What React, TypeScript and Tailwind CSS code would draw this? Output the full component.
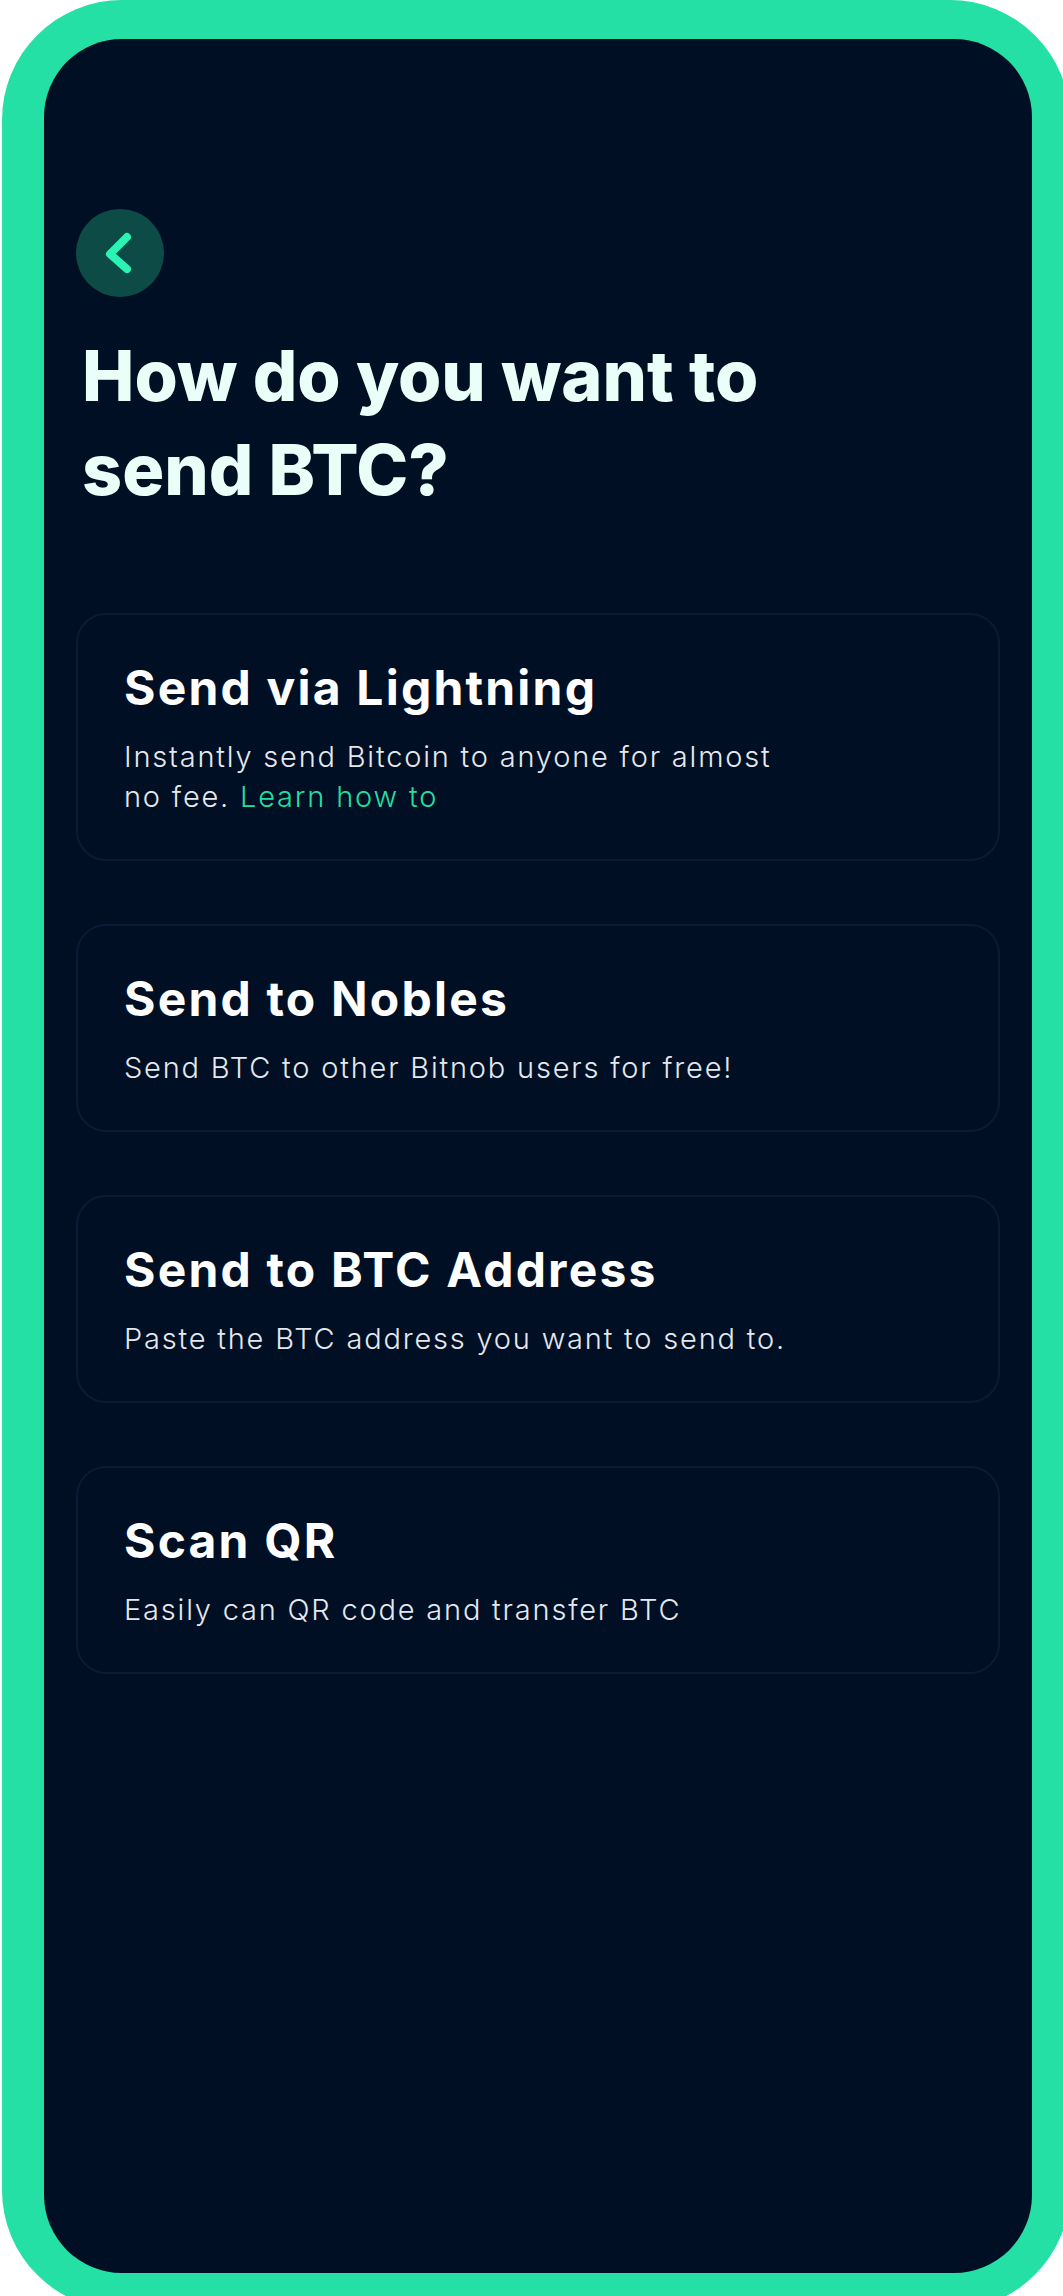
import React from "react";

const options = [
  {
    title: "Send via Lightning",
    desc: (
      <>
        Instantly send Bitcoin to anyone for almost
        <br />
        no fee. <span className="text-[#22dfa0]">Learn how to</span>
      </>
    ),
  },
  { title: "Send to Nobles", desc: <>Send BTC to other Bitnob users for free!</> },
  { title: "Send to BTC Address", desc: <>Paste the BTC address you want to send to.</> },
  { title: "Scan QR", desc: <>Easily can QR code and transfer BTC</> },
];

export default function App() {
  return (
    <div className="w-[1063px] h-[2296px] overflow-hidden bg-white" style={{ fontFamily: "Inter, Lato, sans-serif" }}>
      <div className="ml-[2px] w-[1068px] h-[2310px] rounded-[120px] bg-[#24e0a4] pt-[39px] pl-[42px]">
        <div className="w-[988px] h-[2234px] rounded-[78px] bg-[#000f24] px-[32px] pt-[170px]">
          <button className="w-[88px] h-[88px] rounded-full bg-[#0c4b46] flex items-center justify-center">
            <svg width="88" height="88" viewBox="0 0 88 88" fill="none">
              <path d="M51 28 L34 45 L51 60" stroke="#2af3b3" strokeWidth="8" strokeLinecap="round" strokeLinejoin="round" />
            </svg>
          </button>
          <h1 className="mt-[32px] pl-[6px] text-[70px] leading-[94px] font-extrabold text-[#e9fff7] tracking-[0px]">
            How do you want to
            <br />
            send BTC?
          </h1>
          <div className="mt-[96px] flex flex-col gap-[63px]">
            {options.map((o) => (
              <div key={o.title} className="rounded-[30px] border-2 border-[#0b1b36] pt-[44px] pb-[42px] px-[46px]">
                <div className="text-[48px] leading-[58px] font-bold text-white tracking-[2.2px]">{o.title}</div>
                <div className="mt-[20px] text-[29px] leading-[40px] font-light text-[#e4e8ed] tracking-[1.8px]">{o.desc}</div>
              </div>
            ))}
          </div>
        </div>
      </div>
    </div>
  );
}
